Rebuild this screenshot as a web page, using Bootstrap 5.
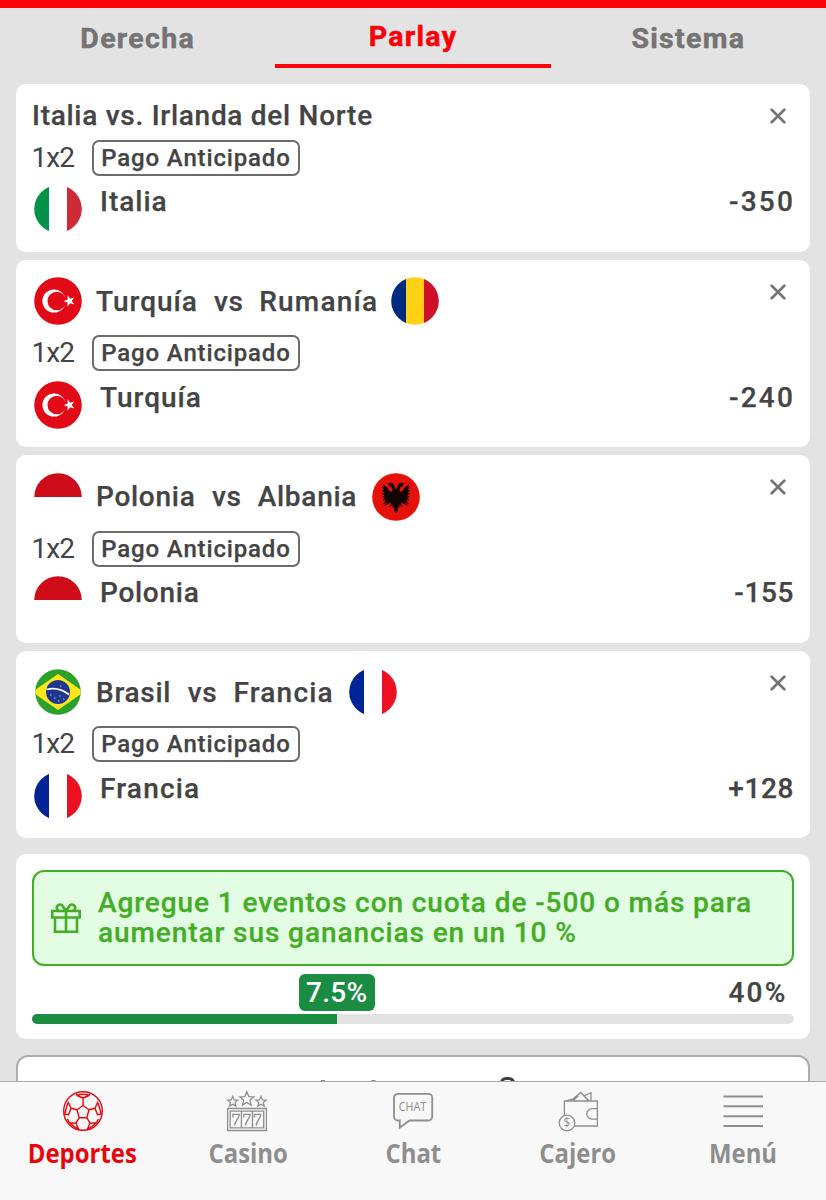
<!DOCTYPE html>
<html lang="es">
<head>
<meta charset="utf-8">
<meta name="viewport" content="width=device-width, initial-scale=1">
<title>Parlay</title>
<link href="https://cdn.jsdelivr.net/npm/bootstrap@5.3.0/dist/css/bootstrap.min.css" rel="stylesheet">
<style>
  body { height: 1200px; overflow: hidden; background: #e3e3e3; color: #444445; font-family: Roboto, "Liberation Sans", sans-serif; font-size: 28px; line-height: 32px; font-weight: 500; -webkit-text-stroke: .25px currentColor; }
  .topline { height: 8px; background: #fb0007; flex: none; }
  .slip-tabs { height: 76px; flex: none; }
  .slip-tabs .nav-link { height: 60px; padding: 15px 0 0; color: #747474; font-weight: 700; font-size: 28.5px; letter-spacing: 1.3px; border-radius: 0; -webkit-text-stroke-width: .5px; }
  .slip-tabs .nav-link.active { padding-top: 13px; color: #fb0007; background: none; border-bottom: 4px solid #fb0007; }
  .bet { background: #fff; border-radius: 10px; height: 187.5px; padding: 16px 16px 0; flex: none; letter-spacing: .72px; }
  .bet.plain { height: 167.5px; }
  .event { height: 52px; }
  .plain .event { height: 32px; }
  .event .flag { margin: 1.500px 0 0 2px; }
  .flag { width: 48px; height: 48px; flex: none; display: block; }
  .names { margin-left: 14px; margin-right: 13px; }
  .names.tight { margin-right: 11px; }
  .vs { margin: 0 16px 0 16.500px; }
  .tight .vs { margin: 0 15.500px 0 16px; }
  .sp-1 { letter-spacing: 1px; }
  .sp-2 { letter-spacing: 1.200px; }
  .close-x { width: 16px; height: 16px; margin: 8px 8px 0 0; }
  .kind { height: 38px; margin-top: 6.500px; }
  .odd-type { width: 60px; font-weight: 400; letter-spacing: -.9px; text-indent: -.5px; -webkit-text-stroke-width: 0; }
  .early { border: 2px solid #6c6c6c; border-radius: 7px; height: 36px; width: 208px; font-size: 24px; line-height: 32px; letter-spacing: .85px; }
  .pick { height: 54px; }
  .pick .flag { margin: 8.500px 18px 0 2px; }
  .pick-row { padding-top: 9.500px; }
  .odds { letter-spacing: .6px; }
  .odds.wide { letter-spacing: 2.200px; margin-right: -1px; }
  .boost { height: 185px; background: #fff; border-radius: 10px; padding: 16px; margin-top: 8px; flex: none; }
  .tip { height: 96px; border: 2px solid #44ad26; border-radius: 12px; background: #e2fde4; color: #44ad26; line-height: 30px; padding-left: 16px; letter-spacing: .91px; }
  .scale { height: 38px; margin: 8px 0 2px; }
  .goal { letter-spacing: 2.200px; margin-right: -1.500px; }
  .pct { background: #1a8d43; color: #fff; border-radius: 6px; height: 37px; width: 76px; line-height: 37px; transform: translateX(-50%); -webkit-text-stroke-width: 0; letter-spacing: .3px; }
  .progress { --bs-progress-height: 10px; --bs-progress-bg: #e3e3e3; --bs-progress-bar-bg: #1a8d43; --bs-progress-border-radius: 5px; }
  .next-card { background: #fff; border: 2px solid #adadad; border-radius: 12px; height: 60px; margin-top: 8px; flex: none; }
  .bottom-nav { height: 119px; background: #f8f8f8; border-top: 1px solid #aaa; color: #8e8e8e; font-family: "Open Sans", sans-serif; font-weight: 700; font-size: 26px; z-index: 2; -webkit-text-stroke-width: 0; }
  .bottom-nav a { color: inherit; text-decoration: none; padding-top: 9px; flex: 1 1 0; }
  .bottom-nav a.on { color: #e8050c; }
  .bottom-nav svg { width: 40px; height: 40px; display: block; margin: 0 auto 6px; overflow: visible; }
  .bottom-nav span { display: inline-block; transform: scaleX(.92); }
</style>
</head>
<body class="d-flex flex-column">
<svg width="0" height="0" class="position-absolute" aria-hidden="true">
  <defs>
    <clipPath id="disc"><circle cx="24" cy="24" r="23.8"/></clipPath>
    <symbol id="x" viewBox="0 0 16 16"><path d="M1.700 1.700l12.600 12.600M14.300 1.700L1.700 14.300" stroke="#747474" stroke-width="2.700" stroke-linecap="round"/></symbol>
    <symbol id="it" viewBox="0 0 48 48"><g clip-path="url(#disc)"><path fill="#009246" d="M0 0h15v48H0z"/><path fill="#ce2b37" d="M33 0h15v48H33z"/></g></symbol>
    <symbol id="fr" viewBox="0 0 48 48"><g clip-path="url(#disc)"><path fill="#002395" d="M0 0h15v48H0z"/><path fill="#ed1021" d="M33 0h15v48H33z"/></g></symbol>
    <symbol id="ro" viewBox="0 0 48 48"><g clip-path="url(#disc)"><path fill="#002b7f" d="M0 0h15v48H0z"/><path fill="#fcd116" d="M15 0h18v48H15z"/><path fill="#ce1126" d="M33 0h15v48H33z"/></g></symbol>
    <symbol id="pl" viewBox="0 0 48 48"><path fill="#ce0b18" d="M.2 24a23.800 23.800 0 0 1 47.600 0z"/></symbol>
    <symbol id="tr" viewBox="0 0 48 48"><circle cx="24" cy="24" r="23.800" fill="#e30a17"/><circle cx="20" cy="24" r="11.600" fill="#fff"/><circle cx="22.800" cy="24" r="9.300" fill="#e30a17"/><path fill="#fff" d="M29.500 24l4.100-1.300V18.300l2.600 3.500 4.100-1.400-2.600 3.600 2.600 3.500-4.100-1.300-2.600 3.500v-4.300z"/></symbol>
    <path id="wing" d="M24 17L22.500 13L21 10.500L17.500 9.500L15.500 11.500L18 12L17 14L19.500 14L20.500 17L20 19L17.500 18L15 14.500L10 10L12 14L10 13.500L12 17L10 17L12 20L10 20.500L12.500 22.500L10 24L13 25L10.500 27.500L14 27L10.500 31.500L16 29L11.500 33.500L18 30L19.500 31L17 34L21 32.500L20.500 35L22.500 34L22 37L24 40.500z"/>
    <symbol id="al" viewBox="0 0 48 48"><circle cx="24" cy="24" r="23.800" fill="#e41208"/><g fill="#120503"><use href="#wing"/><use href="#wing" transform="translate(48) scale(-1 1)"/></g></symbol>
    <clipPath id="brdisc"><circle cx="24" cy="24" r="22.800"/></clipPath>
    <symbol id="br" viewBox="0 0 48 48"><g clip-path="url(#brdisc)"><path fill="#2ba02b" d="M0 0h48v48H0z"/><path fill="#fbe51b" d="M24 6L50 24 24 42-2 24z"/></g><circle cx="24" cy="24" r="12" fill="#20378f"/><path d="M12.500 21.500q12-3 22.500 5" fill="none" stroke="#fff" stroke-width="1.800"/><path d="M16 27h1.500M20 30h1.500M25 28h1.500M29 31h1.500M24 33h1.500M26 18h1.500" stroke="#b9c3e6"/></symbol>
    <path id="star" d="M0-7L2-2.200 7-1.900 3.100 1.500 4.300 6.300 0 3.700-4.300 6.300-3.100 1.500-7-1.900-2-2.200z"/>
  </defs>
</svg>

<div class="topline"></div>
<nav class="slip-tabs nav nav-pills nav-fill flex-nowrap">
  <div class="nav-item col-4"><a class="nav-link">Derecha</a></div>
  <div class="nav-item col-4"><a class="nav-link active">Parlay</a></div>
  <div class="nav-item col-4"><a class="nav-link">Sistema</a></div>
</nav>

<main class="px-3 d-flex flex-column gap-2">
  <section class="bet plain">
    <div class="event d-flex justify-content-between"><span>Italia vs. Irlanda del Norte</span><svg class="close-x"><use href="#x"/></svg></div>
    <div class="kind d-flex align-items-center"><span class="odd-type">1x2</span><span class="early text-center">Pago Anticipado</span></div>
    <div class="pick d-flex"><svg class="flag"><use href="#it"/></svg><span class="pick-row sp-1">Italia</span><span class="pick-row odds wide ms-auto">-350</span></div>
  </section>
  <section class="bet">
    <div class="event d-flex"><svg class="flag"><use href="#tr"/></svg><div class="names tight d-flex align-items-center"><span class="sp-1">Turquía</span><span class="vs">vs</span><span class="sp-2">Rumanía</span></div><svg class="flag"><use href="#ro"/></svg><svg class="close-x ms-auto"><use href="#x"/></svg></div>
    <div class="kind d-flex align-items-center"><span class="odd-type">1x2</span><span class="early text-center">Pago Anticipado</span></div>
    <div class="pick d-flex"><svg class="flag"><use href="#tr"/></svg><span class="pick-row sp-1">Turquía</span><span class="pick-row odds wide ms-auto">-240</span></div>
  </section>
  <section class="bet">
    <div class="event d-flex"><svg class="flag"><use href="#pl"/></svg><div class="names d-flex align-items-center"><span>Polonia</span><span class="vs">vs</span><span>Albania</span></div><svg class="flag"><use href="#al"/></svg><svg class="close-x ms-auto"><use href="#x"/></svg></div>
    <div class="kind d-flex align-items-center"><span class="odd-type">1x2</span><span class="early text-center">Pago Anticipado</span></div>
    <div class="pick d-flex"><svg class="flag"><use href="#pl"/></svg><span class="pick-row">Polonia</span><span class="pick-row odds ms-auto">-155</span></div>
  </section>
  <section class="bet">
    <div class="event d-flex"><svg class="flag"><use href="#br"/></svg><div class="names d-flex align-items-center"><span>Brasil</span><span class="vs">vs</span><span class="sp-2">Francia</span></div><svg class="flag"><use href="#fr"/></svg><svg class="close-x ms-auto"><use href="#x"/></svg></div>
    <div class="kind d-flex align-items-center"><span class="odd-type">1x2</span><span class="early text-center">Pago Anticipado</span></div>
    <div class="pick d-flex"><svg class="flag"><use href="#fr"/></svg><span class="pick-row sp-2">Francia</span><span class="pick-row odds ms-auto">+128</span></div>
  </section>

  <section class="boost">
    <div class="tip d-flex align-items-center">
      <svg width="32" height="32" viewBox="0 0 32 32" fill="none" stroke="#44ad26" stroke-width="2.600" class="me-3 flex-shrink-0"><path d="M2.300 9h27.400v6.500H2.300zM5 15.500V29.700h22V15.500M16 9v21M16 9h-6a3.200 3.200 0 1 1 3-4.400L16 9l3-4.400A3.200 3.200 0 1 1 22 9z"/></svg>
      <div>Agregue 1 eventos con cuota de -500 o más para<br>aumentar sus ganancias en un 10 %</div>
    </div>
    <div class="scale position-relative d-flex align-items-center justify-content-end pe-2">
      <span class="pct position-absolute top-0 text-center" style="left:40%">7.5%</span><span class="goal">40%</span>
    </div>
    <div class="progress"><div class="progress-bar" style="width:40%"></div></div>
  </section>
  <section class="next-card">
    <svg width="790" height="40" class="d-block" fill="none"><path d="M483.500 30v-3.500q0-5 5-5h2q5 0 5 5V30" stroke="#404041" stroke-width="3.200"/><path d="M303 23.500h4M353.500 23.500h4" stroke="#8a8a8a" stroke-width="1"/></svg>
  </section>
</main>

<nav class="bottom-nav fixed-bottom d-flex text-center">
  <a class="on">
    <svg viewBox="0 0 40 40" fill="none" stroke="currentColor" stroke-width="1.400" stroke-linejoin="round"><circle cx="20" cy="20" r="19.300"/><path d="M20 14.500l6 4.200-2.200 8h-7.600l-2.200-8zM20 14.500V7M13 2.500L14 4.500 20 7l6-2.500 1-2M14 4.500q6-2.500 12 0M26 18.700l6-1.500 3-6.700M32 17.200l2.500 6.500 4.500-1M34.500 10.500q2 6 3.500 11.500M14 18.700l-6-1.500-3-6.700M8 17.200l-2.500 6.500-4.500-1M5.500 10.500Q3.500 16 2 22M23.800 26.700l3.200 5.500-2.800 6.500M27 32.200l6.500-.4 2-3.800M33.500 31.800q-4 4-8 5.700M16.200 26.700L13 32.200l2.800 6.500M13 32.200l-6.500-.4-2-3.800M6.500 31.800q4 4 8 5.700"/></svg>
    <span>Deportes</span></a>
  <a>
    <svg viewBox="0 0 40 40" fill="none" stroke="currentColor" stroke-width="1.300"><g transform="translate(-1 0)"><use href="#star" transform="translate(19.800 7.800)"/><use href="#star" transform="translate(5.700 10.500) scale(.74)" stroke-width="1.700"/><use href="#star" transform="translate(34 10.500) scale(.74)" stroke-width="1.700"/><path d="M.6 17.500h38.800v22H.6zM3.200 20.200h33.500v16.600H3.200zM14.400 20.200v16.600M25.500 20.200v16.600"/><path d="M6 26.500v-3.200h6.300q0 2.700-2.700 6.200-1.800 2.500-1.800 5M16.800 26.500v-3.200h6.300q0 2.700-2.700 6.200-1.800 2.500-1.800 5M27.500 26.500v-3.200h6.300q0 2.700-2.700 6.200-1.800 2.500-1.800 5"/></g></svg>
    <span>Casino</span></a>
  <a>
    <svg viewBox="0 0 40 40" fill="none" stroke="currentColor" stroke-width="1.800"><path d="M5 2.800h30.200a4 4 0 0 1 4 4v18.700a4 4 0 0 1-4 4H16.500L6.800 36.700V29.500H5a4 4 0 0 1-4-4V6.800a4 4 0 0 1 4-4z"/><text x="5.700" y="20.400" font-size="12" font-weight="400" textLength="27.500" lengthAdjust="spacingAndGlyphs" fill="currentColor" stroke="none">CHAT</text></svg>
    <span>Chat</span></a>
  <a>
    <svg viewBox="0 0 40 40" fill="none" stroke="currentColor" stroke-width="1.300"><g transform="translate(.7 0)"><path d="M5.700 24.500V10h33v25H16.200M38.700 17.700h-5.400a5.200 5.200 0 0 0 0 10.400h5.400M7.500 9.800l7-2L22 1.500l8 8.300M14.500 9.500l5-4.500M25.500 5L32.300 1.700V10M26.500 6.200l4 3.500"/><circle cx="8.300" cy="32" r="7.800"/><text x="8.300" y="36.300" font-size="12" font-weight="400" text-anchor="middle" fill="currentColor" stroke="none">$</text></g></svg>
    <span>Cajero</span></a>
  <a>
    <svg viewBox="0 0 40 40" stroke="currentColor" stroke-width="2"><path d="M.5 5.500h39.500M.5 15.300h39.500M.5 25.200h39.500M.5 35h39.500"/></svg>
    <span>Menú</span></a>
</nav>
<script src="https://cdn.jsdelivr.net/npm/bootstrap@5.3.0/dist/js/bootstrap.bundle.min.js"></script>
</body>
</html>
